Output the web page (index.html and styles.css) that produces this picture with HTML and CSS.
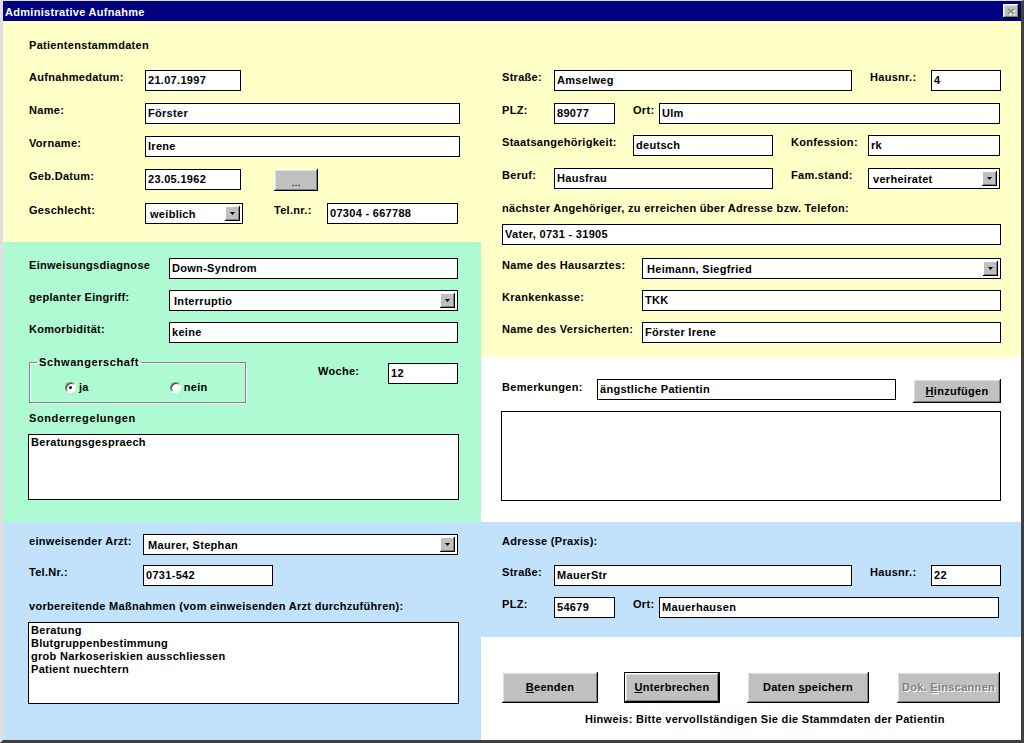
FILE: index.html
```html
<!DOCTYPE html>
<html lang="de">
<head>
<meta charset="utf-8">
<title>Administrative Aufnahme</title>
<link rel="stylesheet" href="styles.css">
</head>
<body>
<div class="window">
  <header class="titlebar">
    <span class="title">Administrative Aufnahme</span>
    <span class="close" aria-label="Schließen"><svg width="8" height="7" viewBox="0 0 8 7"><path d="M1 1.5L7 6.5M7 1.5L1 6.5" stroke="#fff" stroke-width="1.6" transform="translate(1,0.5)"/><path d="M1 1L7 6M7 1L1 6" stroke="#808080" stroke-width="1.6"/></svg></span>
  </header>
  <main class="client">
    <div class="col col-left">
      <section class="panel yellow p-stamm">
        <div class="heading">Patientenstammdaten</div>
        <div class="rows stamm-rows">
          <div class="row"><span class="lbl w116">Aufnahmedatum:</span><span class="field w96">21.07.1997</span></div>
          <div class="row"><span class="lbl w116">Name:</span><span class="field w315">Förster</span></div>
          <div class="row"><span class="lbl w116">Vorname:</span><span class="field w315">Irene</span></div>
          <div class="row"><span class="lbl w116">Geb.Datum:</span><span class="field w96">23.05.1962</span><span class="btn btn-dots"><span>...</span></span></div>
          <div class="row"><span class="lbl w116">Geschlecht:</span><span class="combo w98"><span class="ctext">weiblich</span><span class="arrow"><svg width="5" height="3" viewBox="0 0 5 3"><path d="M0 0H5L2.5 3Z" fill="#000"/></svg></span></span><span class="lbl ml31 w53">Tel.nr.:</span><span class="field w131">07304 - 667788</span></div>
        </div>
      </section>

      <section class="panel green p-einw">
        <div class="rows einw-rows">
          <div class="row"><span class="lbl w140">Einweisungsdiagnose</span><span class="field w289">Down-Syndrom</span></div>
          <div class="row"><span class="lbl w140">geplanter Eingriff:</span><span class="combo w289"><span class="ctext">Interruptio</span><span class="arrow"><svg width="5" height="3" viewBox="0 0 5 3"><path d="M0 0H5L2.5 3Z" fill="#000"/></svg></span></span></div>
          <div class="row"><span class="lbl w140">Komorbidität:</span><span class="field w289">keine</span></div>
        </div>
        <div class="row preg-row">
          <fieldset class="group">
            <legend>Schwangerschaft</legend>
            <div class="radios">
              <span class="radio-item ja"><span class="radio on"></span><span>ja</span></span>
              <span class="radio-item nein"><span class="radio"></span><span>nein</span></span>
            </div>
          </fieldset>
          <span class="lbl woche">Woche:</span>
          <span class="field w70 woche-field">12</span>
        </div>
        <div class="lbl sonder">Sonderregelungen</div>
        <div class="memo memo-sonder">Beratungsgespraech</div>
      </section>

      <section class="panel blue p-arzt">
        <div class="row"><span class="lbl w114">einweisender Arzt:</span><span class="combo w315"><span class="ctext">Maurer, Stephan</span><span class="arrow"><svg width="5" height="3" viewBox="0 0 5 3"><path d="M0 0H5L2.5 3Z" fill="#000"/></svg></span></span></div>
        <div class="row mt10"><span class="lbl w114">Tel.Nr.:</span><span class="field w130">0731-542</span></div>
        <div class="lbl solo mt14">vorbereitende Maßnahmen (vom einweisenden Arzt durchzuführen):</div>
        <div class="memo memo-mass">Beratung<br>Blutgruppenbestimmung<br>grob Narkoseriskien ausschliessen<br>Patient nuechtern</div>
      </section>
    </div>

    <div class="col col-right">
      <section class="panel yellow p-adr">
        <div class="row"><span class="lbl w52">Straße:</span><span class="field w298">Amselweg</span><span class="lbl ml18 w61">Hausnr.:</span><span class="field w70">4</span></div>
        <div class="row mt12"><span class="lbl w52">PLZ:</span><span class="field w61">89077</span><span class="lbl ml18 w26">Ort:</span><span class="field w341">Ulm</span></div>
        <div class="row mt11"><span class="lbl w131">Staatsangehörigkeit:</span><span class="field w140">deutsch</span><span class="lbl ml18 w77">Konfession:</span><span class="field w132">rk</span></div>
        <div class="row mt12"><span class="lbl w52">Beruf:</span><span class="field w219">Hausfrau</span><span class="lbl ml18 w77">Fam.stand:</span><span class="combo w132"><span class="ctext">verheiratet</span><span class="arrow"><svg width="5" height="3" viewBox="0 0 5 3"><path d="M0 0H5L2.5 3Z" fill="#000"/></svg></span></span></div>
        <div class="lbl solo mt13">nächster Angehöriger, zu erreichen über Adresse bzw. Telefon:</div>
        <div class="row mt9"><span class="field w499">Vater, 0731 - 31905</span></div>
        <div class="row mt13"><span class="lbl w140">Name des Hausarztes:</span><span class="combo w359"><span class="ctext">Heimann, Siegfried</span><span class="arrow"><svg width="5" height="3" viewBox="0 0 5 3"><path d="M0 0H5L2.5 3Z" fill="#000"/></svg></span></span></div>
        <div class="row mt11"><span class="lbl w140">Krankenkasse:</span><span class="field w359">TKK</span></div>
        <div class="row mt11"><span class="lbl w140">Name des Versicherten:</span><span class="field w359">Förster Irene</span></div>
      </section>

      <section class="panel white p-bem">
        <div class="row"><span class="lbl w95 bem-lbl">Bemerkungen:</span><span class="field w299">ängstliche Patientin</span><span class="btn btn-add"><span><u>H</u>inzufügen</span></span></div>
        <div class="memo memo-bem"></div>
      </section>

      <section class="panel blue p-praxis">
        <div class="lbl solo">Adresse (Praxis):</div>
        <div class="row mt17"><span class="lbl w52">Straße:</span><span class="field w298">MauerStr</span><span class="lbl ml18 w61">Hausnr.:</span><span class="field w70">22</span></div>
        <div class="row mt11"><span class="lbl w52">PLZ:</span><span class="field w61">54679</span><span class="lbl ml18 w26">Ort:</span><span class="field w340">Mauerhausen</span></div>
      </section>

      <section class="panel white p-actions">
        <div class="buttons">
          <span class="btn btn-act w96"><span><u>B</u>eenden</span></span>
          <span class="btn btn-act btn-default w96 ml26"><span><u>U</u>nterbrechen</span></span>
          <span class="btn btn-act w122 ml27"><span>Daten <u>s</u>peichern</span></span>
          <span class="btn btn-act btn-disabled w103 ml28"><span>Dok. <u>E</u>inscannen</span></span>
        </div>
        <div class="hint">Hinweis: Bitte vervollständigen Sie die Stammdaten der Patientin</div>
      </section>
    </div>
  </main>
</div>
</body>
</html>
```

FILE: styles.css
```css
* { box-sizing: border-box; }
html, body { margin: 0; padding: 0; }
body {
  width: 1024px;
  height: 743px;
  overflow: hidden;
  background: #c0c0c0;
  font: bold 11px/13px "Liberation Sans", Arial, sans-serif;
  letter-spacing: 0.3px;
  color: #000;
}

.window {
  width: 1024px;
  height: 743px;
  display: flex;
  flex-direction: column;
  border-style: solid;
  border-width: 1px 3px 3px 3px;
  border-color: #dfdfdf #404040 #404040 #dfdfdf;
  background: #c0c0c0;
}

.titlebar {
  height: 20px;
  flex: none;
  background: #000080;
  color: #fff;
  display: flex;
  align-items: center;
  justify-content: space-between;
  padding: 0 2px 0 2px;
}
.title { line-height: 13px; padding-top: 2px; }
.close {
  width: 16px;
  height: 14px;
  background: #c0c0c0;
  box-shadow: inset -1px -1px #000, inset 1px 1px #fff, inset -2px -2px #808080, inset 2px 2px #dfdfdf;
  display: flex;
  align-items: center;
  justify-content: center;
}

.client {
  flex: 1;
  display: flex;
  min-height: 0;
}
.col { display: flex; flex-direction: column; }
.col-left { width: 478px; flex: none; }
.col-right { flex: 1; }

.panel { flex: none; }
.yellow { background: #ffffc8; }
.green { background: #aefad2; }
.blue { background: #c2e2fc; }
.white { background: #ffffff; }

/* left panels */
.p-stamm { height: 221px; padding: 18px 0 0 26px; }
.p-einw { height: 280px; padding: 16px 0 0 26px; }
.p-arzt { flex: 1; padding: 12px 0 0 26px; }

/* right panels */
.p-adr { height: 336px; padding: 49px 0 0 21px; }
.p-bem { height: 165px; padding: 22px 0 0 21px; }
.p-praxis { height: 115px; padding: 13px 0 0 21px; }
.p-actions { flex: 1; padding: 35px 0 0 21px; }

.heading { line-height: 13px; }

.rows { display: flex; flex-direction: column; }
.stamm-rows { margin-top: 18px; gap: 12px; }
.einw-rows { gap: 11px; }

.row { display: flex; align-items: flex-start; }
.lbl { flex: none; padding-top: 1px; white-space: nowrap; }
.lbl.solo { padding-top: 0; }

.field {
  flex: none;
  height: 21px;
  border: 1px solid #000;
  background: #fff;
  padding: 0 2px;
  line-height: 19px;
  white-space: nowrap;
  overflow: hidden;
}

.combo {
  flex: none;
  height: 21px;
  border: 1px solid #000;
  background: #fff;
  display: flex;
  align-items: center;
  padding-left: 4px;
}
.combo .ctext { flex: 1; line-height: 13px; padding-top: 2px; white-space: nowrap; }
.combo .arrow {
  width: 15px;
  height: 15px;
  margin-right: 2px;
  background: #c0c0c0;
  box-shadow: inset -1px -1px #000, inset 1px 1px #fff, inset -2px -2px #808080;
  display: flex;
  align-items: center;
  justify-content: center;
}

.btn {
  flex: none;
  display: flex;
  align-items: center;
  justify-content: center;
  background: #c0c0c0;
  box-shadow: inset -1px -1px #000, inset 1px 1px #fff, inset -2px -2px #808080, inset 2px 2px #dfdfdf;
  white-space: nowrap;
}
.btn u { text-decoration-thickness: 1px; text-underline-offset: 1px; }
.btn-dots { width: 44px; height: 22px; margin-left: 33px; padding-top: 4px; letter-spacing: 0; font-weight: normal; }
.btn-add { width: 88px; height: 24px; margin-left: 17px; }
.btn-act { height: 31px; }
.btn-default { border: 1px solid #000; }
.btn-disabled { color: #808080; text-shadow: 1px 1px #fff; }

/* pregnancy group */
.preg-row { margin-top: 13px; }
.group {
  width: 217px;
  margin: 0;
  padding: 12px 0 8px 0;
  border: 1px solid #808080;
  box-shadow: inset 1px 1px #fff, 1px 1px #fff;
}
.group legend {
  margin-left: 7px;
  padding: 0 2px;
  line-height: 13px;
  letter-spacing: 0.6px;
}
.radios { display: flex; line-height: 13px; }
.radio-item { display: flex; align-items: center; }
.radio-item.ja { margin-left: 35px; }
.radio-item.nein { margin-left: 81px; }
.radio {
  width: 11px;
  height: 11px;
  margin-right: 3px;
  border-radius: 50%;
  background: #fff;
  border: 1px solid;
  border-color: #808080 #fff #fff #808080;
  box-shadow: inset 1px 1px #404040;
  display: flex;
  align-items: center;
  justify-content: center;
}
.radio.on::after {
  content: "";
  width: 3px;
  height: 3px;
  border-radius: 50%;
  background: #000;
}
.woche { margin: 8px 0 0 72px; width: 70px; }
.woche-field { margin-top: 7px; }

.sonder { margin-top: 9px; padding-top: 0; letter-spacing: 0.6px; }

.memo {
  border: 1px solid #000;
  background: #fff;
  padding: 1px 2px;
  line-height: 13px;
  margin-left: -1px;
}
.memo-sonder { width: 431px; height: 66px; margin-top: 9px; }
.memo-mass { width: 431px; height: 82px; margin-top: 9px; padding-top: 1px; }
.memo-bem { width: 500px; height: 90px; margin-top: 8px; }
.bem-lbl { padding-top: 2px; }

.buttons { display: flex; }
.hint { margin: 10px 0 0 83px; line-height: 13px; white-space: nowrap; }

/* spacing utilities */
.mt9 { margin-top: 9px; }
.mt10 { margin-top: 10px; }
.mt11 { margin-top: 11px; }
.mt12 { margin-top: 12px; }
.mt13 { margin-top: 13px; }
.mt14 { margin-top: 14px; }
.mt17 { margin-top: 17px; }
.ml18 { margin-left: 18px; }
.ml26 { margin-left: 26px; }
.ml27 { margin-left: 27px; }
.ml28 { margin-left: 28px; }
.ml31 { margin-left: 31px; }

/* width utilities */
.w26 { width: 26px; }
.w52 { width: 52px; }
.w53 { width: 53px; }
.w61 { width: 61px; }
.w70 { width: 70px; }
.w77 { width: 77px; }
.w95 { width: 95px; }
.w96 { width: 96px; }
.w98 { width: 98px; }
.w103 { width: 103px; }
.w114 { width: 114px; }
.w116 { width: 116px; }
.w122 { width: 122px; }
.w130 { width: 130px; }
.w131 { width: 131px; }
.w132 { width: 132px; }
.w140 { width: 140px; }
.w219 { width: 219px; }
.w289 { width: 289px; }
.w298 { width: 298px; }
.w299 { width: 299px; }
.w315 { width: 315px; }
.w340 { width: 340px; }
.w341 { width: 341px; }
.w359 { width: 359px; }
.w499 { width: 499px; }
```
